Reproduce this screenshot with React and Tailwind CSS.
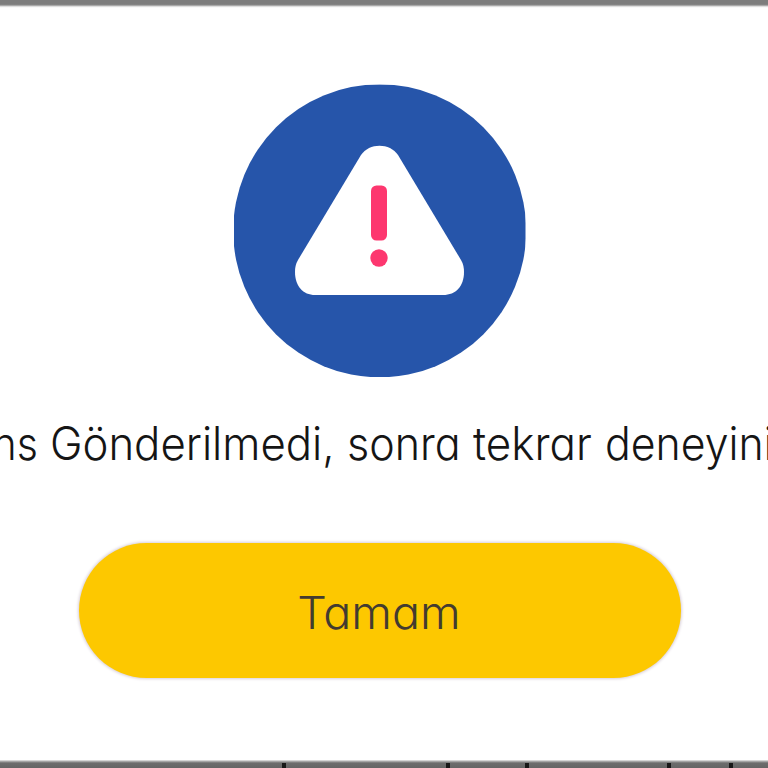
function WarningIcon() {
  return (
    <svg width="292" height="293" viewBox="0 0 292 293" className="ml-[234px] block shrink-0" aria-hidden="true">
      <clipPath id="disc">
        <rect x="0" y="0.500" width="291.5" height="292.500" />
      </clipPath>
      <circle cx="145.7" cy="146.800" r="146.500" fill="#2655aa" clipPath="url(#disc)" />
      <path
        d="M127 71 C135 58.500 156 58.500 164 71 L227 176 Q230 181 230 188 C230 202 222 211 209 211 H81 C69 211 61 202 61 188 Q61 181 64 176 Z"
        fill="#fff"
      />
      <rect x="137" y="101.500" width="16" height="55" rx="5.500" fill="#fd376f" />
      <circle cx="145" cy="174" r="8.700" fill="#fd376f" />
    </svg>
  );
}

export default function App() {
  return (
    <main className="flex h-[768px] w-[768px] flex-col overflow-hidden bg-white font-['Inter',sans-serif] font-light [font-feature-settings:'cv11']">
      <div className="h-[8px] shrink-0 bg-[linear-gradient(#7d7d7d_0_4px,#8a8a8a_5px,#c8c8c8_6px,#f4f4f4_7px,#fff_8px)]" />
      <div className="h-[76px] shrink-0" />
      <WarningIcon />
      <p className="mt-[32px] flex h-[68px] w-[768px] shrink-0 overflow-hidden whitespace-pre text-[46px] leading-[68px] text-[#151515]">
        <span className="flex w-[50px] shrink-0 justify-end pr-[12px]"><span className="origin-right scale-x-[0.89]">ns</span></span>
        <span className="w-[297px] shrink-0 origin-left scale-x-[0.95]">Gönderilmedi,</span>
        <span className="w-[126px] shrink-0 origin-left scale-x-[0.935]">sonra</span>
        <span className="w-[132px] shrink-0 origin-left scale-x-[0.955]">tekrar</span>
        <span className="w-[200px] shrink-0 origin-left scale-x-[0.93]">deneyiniz</span>
      </p>
      <button className="ml-[79px] mt-[66px] flex h-[135px] w-[602px] shrink-0 items-center justify-center rounded-full bg-[#fdc800] text-[45px] text-[#433b30] shadow-[0_0_3px_1px_#d8cfd8]">
        <span className="-translate-x-px translate-y-[2px] scale-x-[1.035]">Tamam</span>
      </button>
      <div className="h-[82px] shrink-0" />
      <footer className="flex h-[8px] shrink-0 bg-[linear-gradient(#f0f0f0_0,#b8b8b8_1px,#929292_2px,#6d6d6d_3px,#656565_8px)] pt-[3px]">
        <i className="ml-[282px] h-[5px] w-[4px] bg-[#181818]" />
        <i className="ml-[160px] h-[5px] w-[4px] bg-[#181818]" />
        <i className="ml-[75px] h-[5px] w-[4px] bg-[#181818]" />
        <i className="ml-[138px] h-[5px] w-[4px] bg-[#181818]" />
        <i className="ml-[58px] h-[5px] w-[4px] bg-[#181818]" />
      </footer>
    </main>
  );
}
